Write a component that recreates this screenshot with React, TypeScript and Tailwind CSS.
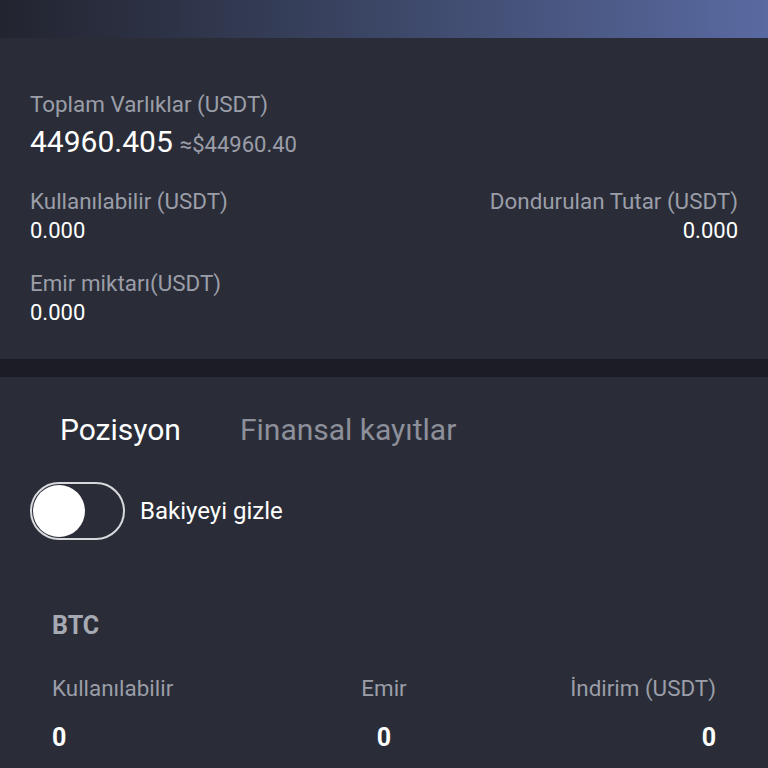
import React from "react";

const Stat = ({ label, value, right }: { label: string; value: string; right?: boolean }) => (
  <div className={right ? "flex flex-col items-end" : "flex flex-col"}>
    <span className="text-[22.4px] leading-[30px] text-[#9b9ea8]">{label}</span>
    <span className="text-[22px] leading-[30px] text-white">{value}</span>
  </div>
);

const App = () => {
  return (
    <div className="min-h-[768px] w-[768px] bg-[#2a2d38] font-['Roboto',sans-serif]">
      <div className="h-[38px] bg-gradient-to-r from-[#22242f] via-[#3c4767] to-[#5a6aa2]" />

      <div className="px-[30px] pt-[51px] pb-[31px]">
        <div className="text-[22.4px] leading-[30px] text-[#9b9ea8]">Toplam Varlıklar (USDT)</div>
        <div className="mt-[5px] flex h-[36px] items-baseline gap-[7px]">
          <span className="text-[30px] leading-[36px] text-white">44960.405</span>
          <span className="text-[22px] text-[#9b9ea8]">≈$44960.40</span>
        </div>

        <div className="mt-[26px] flex justify-between">
          <Stat label="Kullanılabilir (USDT)" value="0.000" />
          <Stat label="Dondurulan Tutar (USDT)" value="0.000" right />
        </div>

        <div className="mt-[22px]">
          <Stat label="Emir miktarı(USDT)" value="0.000" />
        </div>
      </div>

      <div className="h-[18px] bg-[#1b1c24]" />

      <div className="px-[30px] pt-[35px]">
        <div className="flex gap-[59px] pl-[30px]">
          <span className="text-[30px] leading-[36px] text-white">Pozisyon</span>
          <span className="text-[30px] leading-[36px] text-[#8d909a]">Finansal kayıtlar</span>
        </div>

        <div className="mt-[34px] flex items-center gap-[15px]">
          <div className="flex h-[58px] w-[95px] items-center rounded-full border-2 border-[#d8d9dc] p-[1px]">
            <div className="h-[52px] w-[52px] rounded-full bg-white" />
          </div>
          <span className="text-[24px] leading-[30px] text-white">Bakiyeyi gizle</span>
        </div>

        <div className="px-[22px] pt-[71px]">
          <div className="text-[25px] font-bold leading-[30px] text-[#a7aab2]">BTC</div>
          <div className="mt-[32px] grid grid-cols-3">
            <span className="text-[22.4px] leading-[30px] text-[#9b9ea8]">Kullanılabilir</span>
            <span className="text-center text-[22.4px] leading-[30px] text-[#9b9ea8]">Emir</span>
            <span className="text-right text-[22.4px] leading-[30px] text-[#9b9ea8]">İndirim (USDT)</span>
          </div>
          <div className="mt-[20px] grid grid-cols-3">
            <span className="text-[25px] font-bold leading-[30px] text-white">0</span>
            <span className="text-center text-[25px] font-bold leading-[30px] text-white">0</span>
            <span className="text-right text-[25px] font-bold leading-[30px] text-white">0</span>
          </div>
        </div>
      </div>
    </div>
  );
};

export default App;
